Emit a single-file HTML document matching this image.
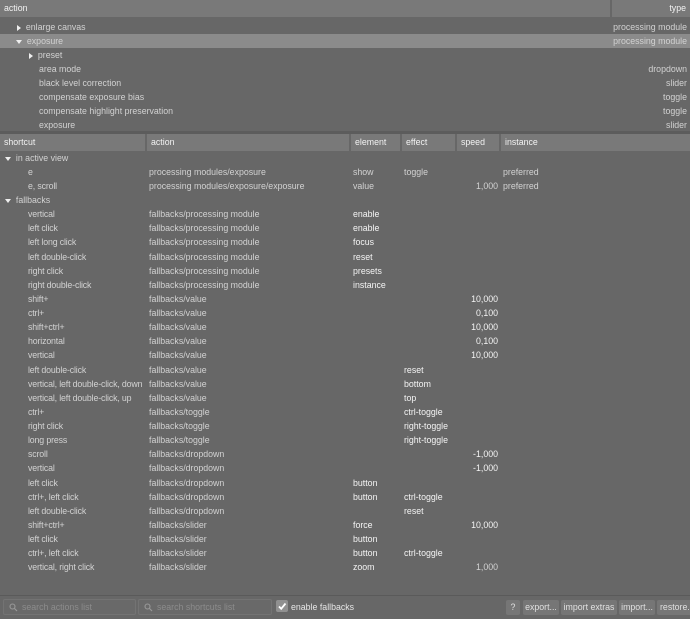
<!DOCTYPE html>
<html><head><meta charset="utf-8"><style>
*{margin:0;padding:0;box-sizing:border-box}
body{width:690px;height:619px;background:#676767;font-family:"Liberation Sans",sans-serif;font-size:8.8px;color:#d2d2d2;position:relative;overflow:hidden}
.a{position:absolute;white-space:nowrap;line-height:14px}
.h{position:absolute;background:#797979;height:17px;color:#f2f2f2;line-height:17px;padding-left:4px}
.r{position:absolute;left:0;width:690px;height:14px}
.r>span{position:absolute;top:0;line-height:14px;white-space:nowrap}
.c1{left:28px;letter-spacing:-0.15px}.c2{left:149px}.c3{left:353px}.c4{left:404px}.c5{right:192px;text-align:right}.c6{left:503px}
.b{color:#f4f4f4}
.tri{display:inline-block;width:0;height:0;vertical-align:middle}
.tr{border-left:4px solid #eee;border-top:3.5px solid transparent;border-bottom:3.5px solid transparent}
.td{border-top:4px solid #eee;border-left:3.5px solid transparent;border-right:3.5px solid transparent}
.btn{position:absolute;top:600px;height:15px;background:#767676;color:#e0e0e0;line-height:15px;text-align:center;border-radius:2px}
.srch{position:absolute;top:599px;height:16px;border:1px solid #737373;background:#696969;color:#8c8c8c;line-height:14px;padding-left:18px;border-radius:2px}
</style></head><body>
<div class="h" style="left:0;top:0;width:610px">action</div>
<div class="h" style="left:612px;top:0;width:78px;text-align:right;padding-right:4px">type</div>
<div class="a" style="left:0;top:34px;width:690px;height:14px;background:#8b8b8b"></div>
<div class="a" style="left:17px;top:20px"><span class="tri tr"></span>&nbsp; enlarge canvas</div>
<div class="a" style="left:16px;top:34px"><span class="tri td"></span>&nbsp; exposure</div>
<div class="a" style="left:29px;top:48px"><span class="tri tr"></span>&nbsp; preset</div>
<div class="a" style="left:39px;top:62px">area mode</div>
<div class="a" style="left:39px;top:76px">black level correction</div>
<div class="a" style="left:39px;top:90px">compensate exposure bias</div>
<div class="a" style="left:39px;top:104px">compensate highlight preservation</div>
<div class="a" style="left:39px;top:118px">exposure</div>
<div class="a" style="right:3px;top:20px">processing module</div>
<div class="a" style="right:3px;top:34px">processing module</div>
<div class="a" style="right:3px;top:62px">dropdown</div>
<div class="a" style="right:3px;top:76px">slider</div>
<div class="a" style="right:3px;top:90px">toggle</div>
<div class="a" style="right:3px;top:104px">toggle</div>
<div class="a" style="right:3px;top:118px">slider</div>
<div class="a" style="left:0;top:131px;width:690px;height:3px;background:#5c5c5c"></div>
<div class="h" style="left:0;top:134px;width:145px">shortcut</div>
<div class="h" style="left:147px;top:134px;width:202px">action</div>
<div class="h" style="left:351px;top:134px;width:49px">element</div>
<div class="h" style="left:402px;top:134px;width:53px">effect</div>
<div class="h" style="left:457px;top:134px;width:42px">speed</div>
<div class="h" style="left:501px;top:134px;width:189px">instance</div>

<div class="r" style="top:151px"><span style="left:5px"><span class="tri td"></span>&nbsp; in active view</span></div>
<div class="r" style="top:165px"><span class="c1">e</span><span class="c2">processing modules/exposure</span><span class="c3">show</span><span class="c4">toggle</span><span class="c6">preferred</span></div>
<div class="r" style="top:179px"><span class="c1">e, scroll</span><span class="c2">processing modules/exposure/exposure</span><span class="c3">value</span><span class="c5">1,000</span><span class="c6">preferred</span></div>
<div class="r" style="top:193px"><span style="left:5px"><span class="tri td"></span>&nbsp; fallbacks</span></div>
<div class="r" style="top:207px"><span class="c1">vertical</span><span class="c2">fallbacks/processing module</span><span class="c3 b">enable</span></div>
<div class="r" style="top:221px"><span class="c1">left click</span><span class="c2">fallbacks/processing module</span><span class="c3 b">enable</span></div>
<div class="r" style="top:235px"><span class="c1">left long click</span><span class="c2">fallbacks/processing module</span><span class="c3 b">focus</span></div>
<div class="r" style="top:250px"><span class="c1">left double-click</span><span class="c2">fallbacks/processing module</span><span class="c3 b">reset</span></div>
<div class="r" style="top:264px"><span class="c1">right click</span><span class="c2">fallbacks/processing module</span><span class="c3 b">presets</span></div>
<div class="r" style="top:278px"><span class="c1">right double-click</span><span class="c2">fallbacks/processing module</span><span class="c3 b">instance</span></div>
<div class="r" style="top:292px"><span class="c1">shift+</span><span class="c2">fallbacks/value</span><span class="c5 b">10,000</span></div>
<div class="r" style="top:306px"><span class="c1">ctrl+</span><span class="c2">fallbacks/value</span><span class="c5 b">0,100</span></div>
<div class="r" style="top:320px"><span class="c1">shift+ctrl+</span><span class="c2">fallbacks/value</span><span class="c5 b">10,000</span></div>
<div class="r" style="top:334px"><span class="c1">horizontal</span><span class="c2">fallbacks/value</span><span class="c5 b">0,100</span></div>
<div class="r" style="top:348px"><span class="c1">vertical</span><span class="c2">fallbacks/value</span><span class="c5 b">10,000</span></div>
<div class="r" style="top:363px"><span class="c1">left double-click</span><span class="c2">fallbacks/value</span><span class="c4 b">reset</span></div>
<div class="r" style="top:377px"><span class="c1">vertical, left double-click, down</span><span class="c2">fallbacks/value</span><span class="c4 b">bottom</span></div>
<div class="r" style="top:391px"><span class="c1">vertical, left double-click, up</span><span class="c2">fallbacks/value</span><span class="c4 b">top</span></div>
<div class="r" style="top:405px"><span class="c1">ctrl+</span><span class="c2">fallbacks/toggle</span><span class="c4 b">ctrl-toggle</span></div>
<div class="r" style="top:419px"><span class="c1">right click</span><span class="c2">fallbacks/toggle</span><span class="c4 b">right-toggle</span></div>
<div class="r" style="top:433px"><span class="c1">long press</span><span class="c2">fallbacks/toggle</span><span class="c4 b">right-toggle</span></div>
<div class="r" style="top:447px"><span class="c1">scroll</span><span class="c2">fallbacks/dropdown</span><span class="c5 b">-1,000</span></div>
<div class="r" style="top:461px"><span class="c1">vertical</span><span class="c2">fallbacks/dropdown</span><span class="c5 b">-1,000</span></div>
<div class="r" style="top:476px"><span class="c1">left click</span><span class="c2">fallbacks/dropdown</span><span class="c3 b">button</span></div>
<div class="r" style="top:490px"><span class="c1">ctrl+, left click</span><span class="c2">fallbacks/dropdown</span><span class="c3 b">button</span><span class="c4 b">ctrl-toggle</span></div>
<div class="r" style="top:504px"><span class="c1">left double-click</span><span class="c2">fallbacks/dropdown</span><span class="c4 b">reset</span></div>
<div class="r" style="top:518px"><span class="c1">shift+ctrl+</span><span class="c2">fallbacks/slider</span><span class="c3 b">force</span><span class="c5 b">10,000</span></div>
<div class="r" style="top:532px"><span class="c1">left click</span><span class="c2">fallbacks/slider</span><span class="c3 b">button</span></div>
<div class="r" style="top:546px"><span class="c1">ctrl+, left click</span><span class="c2">fallbacks/slider</span><span class="c3 b">button</span><span class="c4 b">ctrl-toggle</span></div>
<div class="r" style="top:560px"><span class="c1">vertical, right click</span><span class="c2">fallbacks/slider</span><span class="c3 b">zoom</span><span class="c5">1,000</span></div>

<div class="a" style="left:0;top:595px;width:690px;height:1px;background:#5a5a5a"></div>
<div class="srch" style="left:3px;width:133px">search actions list</div>
<div class="srch" style="left:138px;width:134px">search shortcuts list</div>
<svg style="position:absolute;left:9px;top:603px" width="9" height="9"><circle cx="3.5" cy="3.5" r="2.5" fill="none" stroke="#999" stroke-width="1.1"/><path d="M5.5 5.5L8 8" stroke="#999" stroke-width="1.2"/></svg>
<svg style="position:absolute;left:144px;top:603px" width="9" height="9"><circle cx="3.5" cy="3.5" r="2.5" fill="none" stroke="#999" stroke-width="1.1"/><path d="M5.5 5.5L8 8" stroke="#999" stroke-width="1.2"/></svg>
<div class="a" style="left:276px;top:600px;width:12px;height:12px;background:#909090;border-radius:2px"></div>
<svg style="position:absolute;left:277px;top:601px" width="10" height="10"><path d="M2 5.5L4.2 7.8L8.5 2.5" fill="none" stroke="#fff" stroke-width="1.8"/></svg>
<div class="a" style="left:291px;top:600px;color:#e6e6e6">enable fallbacks</div>
<div class="btn" style="left:506px;width:14px">?</div>
<div class="btn" style="left:523px;width:36px">export...</div>
<div class="btn" style="left:561px;width:56px">import extras</div>
<div class="btn" style="left:619px;width:36px">import...</div>
<div class="btn" style="left:657px;width:36px;text-align:left;padding-left:3px">restore...</div>
</body></html>
